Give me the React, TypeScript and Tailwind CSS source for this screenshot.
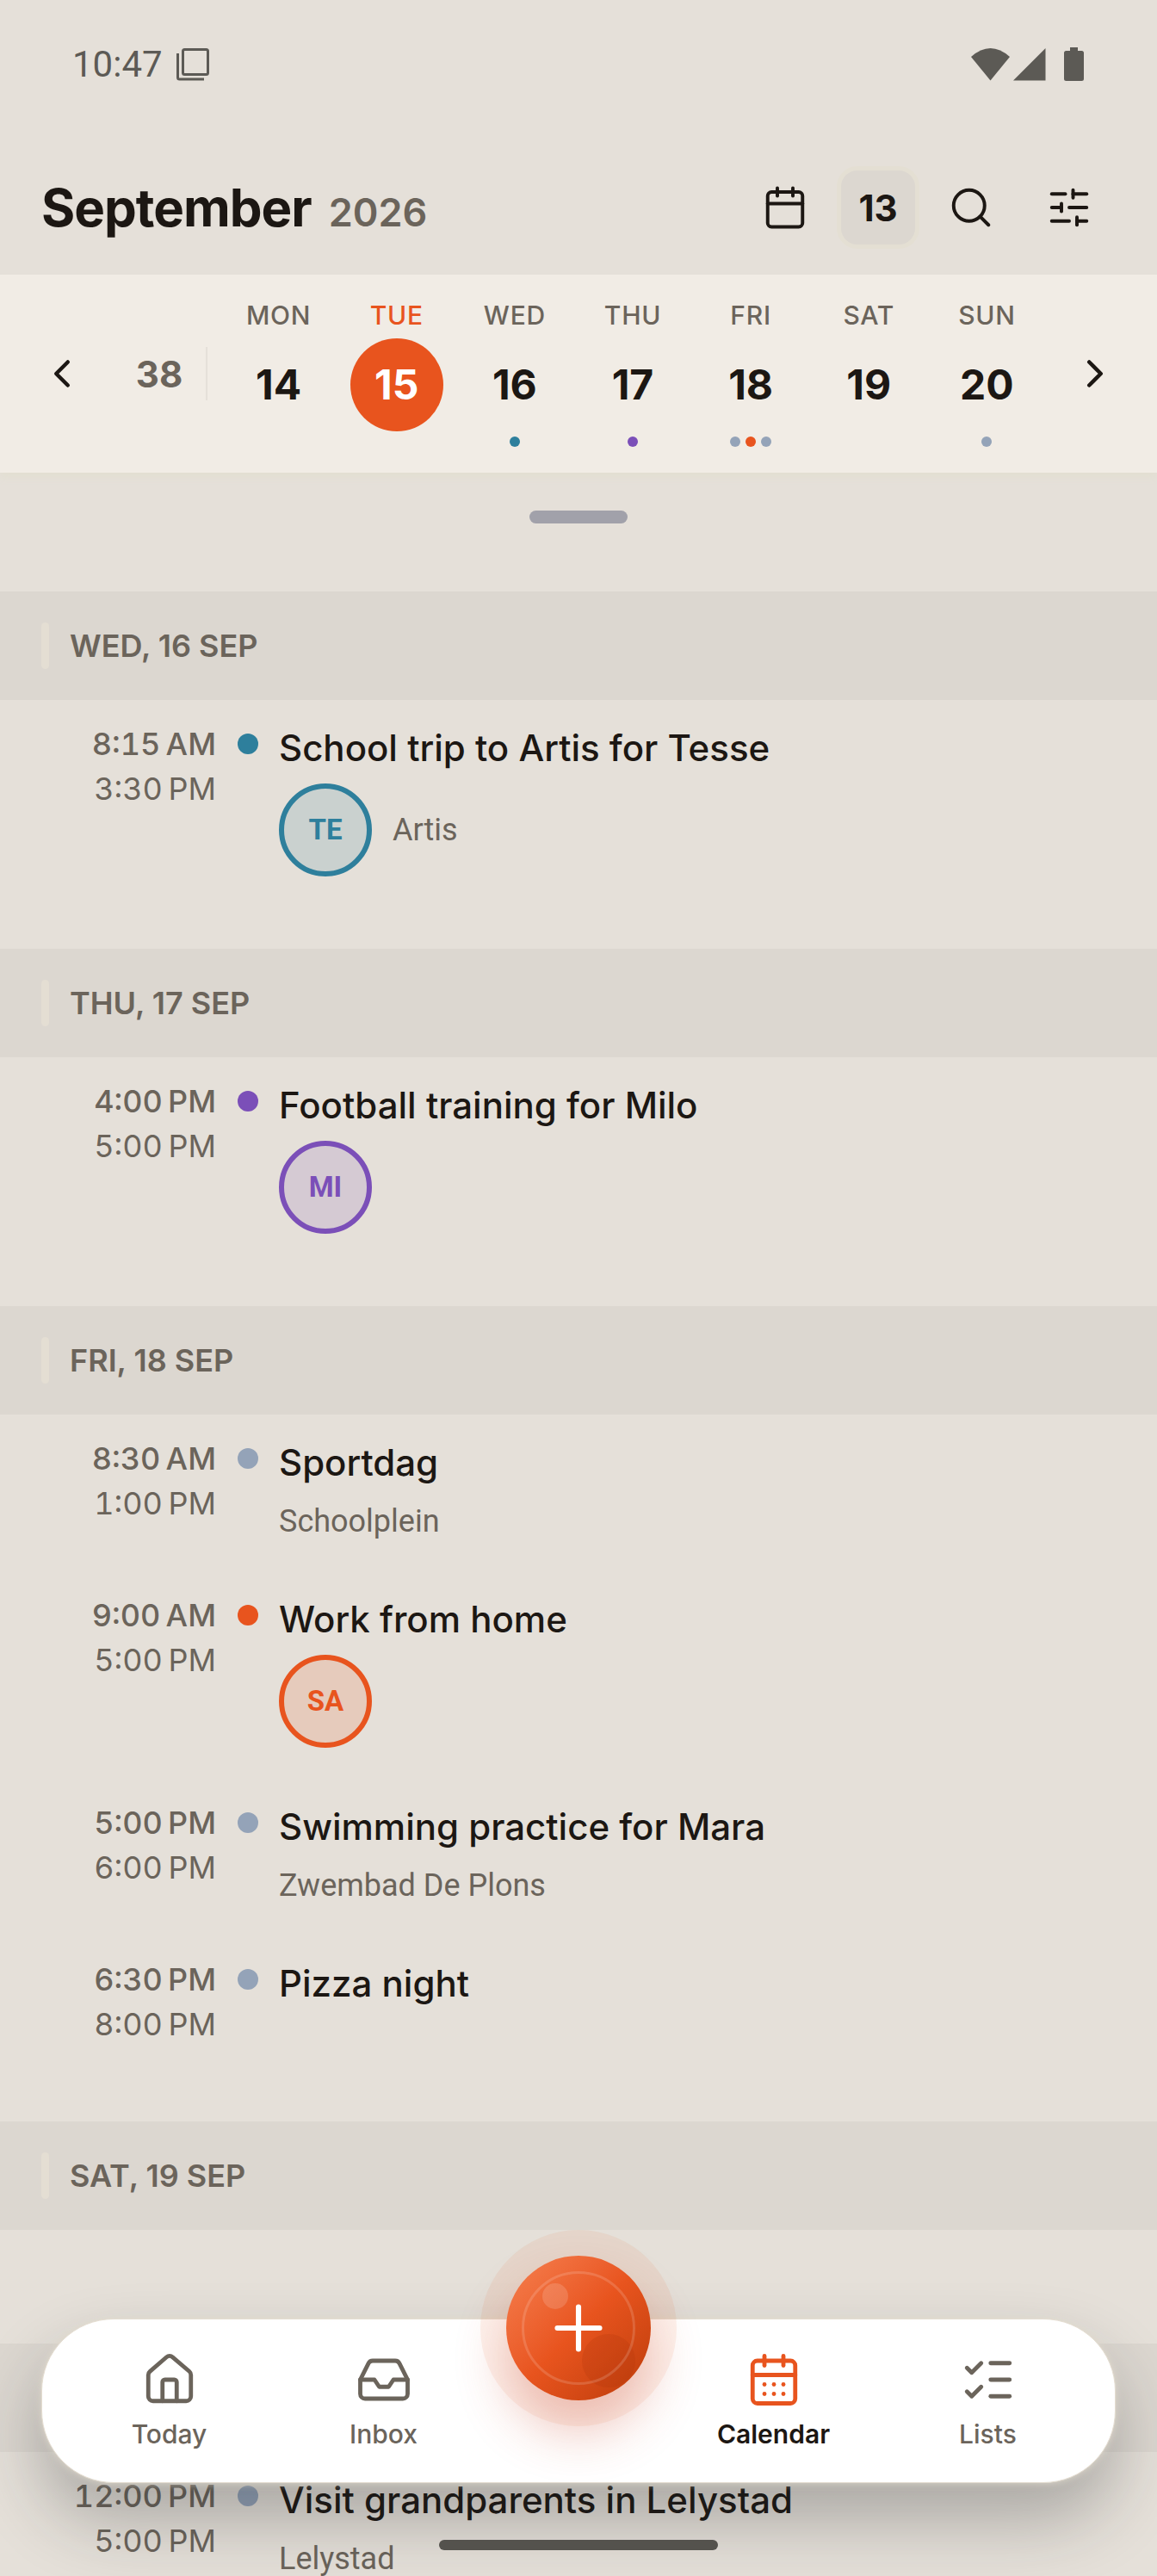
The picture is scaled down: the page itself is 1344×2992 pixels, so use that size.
import {
  Calendar,
  CalendarDays,
  ChevronLeft,
  ChevronRight,
  House,
  Inbox,
  ListChecks,
  Plus,
  Search,
  SlidersHorizontal,
} from "lucide-react";
import clsx from "clsx";

type Tone = "teal" | "purple" | "orange" | "slate";

type CalendarEvent = {
  start: string;
  end: string;
  title: string;
  tone: Tone;
  initials?: string;
  location?: string;
};

const dotColor: Record<Tone, string> = {
  teal: "bg-[#2e7f9c]",
  purple: "bg-[#7b4fb8]",
  orange: "bg-[#e8541e]",
  slate: "bg-[#94a3b8]",
};

const avatarColor: Record<Tone, string> = {
  teal: "border-[#2e7f9c] bg-[#2e7f9c]/15 text-[#2e7f9c]",
  purple: "border-[#7b4fb8] bg-[#7b4fb8]/15 text-[#7b4fb8]",
  orange: "border-[#e8541e] bg-[#e8541e]/15 text-[#e8541e]",
  slate: "border-[#94a3b8] bg-[#94a3b8]/15 text-[#94a3b8]",
};

const week: { label: string; day: number; dots: Tone[]; selected?: boolean }[] = [
  { label: "MON", day: 14, dots: [] },
  { label: "TUE", day: 15, dots: [], selected: true },
  { label: "WED", day: 16, dots: ["teal"] },
  { label: "THU", day: 17, dots: ["purple"] },
  { label: "FRI", day: 18, dots: ["slate", "orange", "slate"] },
  { label: "SAT", day: 19, dots: [] },
  { label: "SUN", day: 20, dots: ["slate"] },
];

// Times use a narrow no-break space before AM/PM
const agenda: { date: string; events: CalendarEvent[] }[] = [
  {
    date: "WED, 16 SEP",
    events: [
      {
        start: "8:15\u202fAM",
        end: "3:30\u202fPM",
        title: "School trip to Artis for Tesse",
        tone: "teal",
        initials: "TE",
        location: "Artis",
      },
    ],
  },
  {
    date: "THU, 17 SEP",
    events: [
      {
        start: "4:00\u202fPM",
        end: "5:00\u202fPM",
        title: "Football training for Milo",
        tone: "purple",
        initials: "MI",
      },
    ],
  },
  {
    date: "FRI, 18 SEP",
    events: [
      { start: "8:30\u202fAM", end: "1:00\u202fPM", title: "Sportdag", tone: "slate", location: "Schoolplein" },
      { start: "9:00\u202fAM", end: "5:00\u202fPM", title: "Work from home", tone: "orange", initials: "SA" },
      {
        start: "5:00\u202fPM",
        end: "6:00\u202fPM",
        title: "Swimming practice for Mara",
        tone: "slate",
        location: "Zwembad De Plons",
      },
      { start: "6:30\u202fPM", end: "8:00\u202fPM", title: "Pizza night", tone: "slate" },
    ],
  },
  { date: "SAT, 19 SEP", events: [] },
  {
    date: "SUN, 20 SEP",
    events: [
      {
        start: "12:00\u202fPM",
        end: "5:00\u202fPM",
        title: "Visit grandparents in Lelystad",
        tone: "slate",
        location: "Lelystad",
      },
    ],
  },
];

function StatusBar() {
  return (
    <div className="flex h-[150px] shrink-0 items-center justify-between px-[84px] text-[#5c5a55]">
      <div className="flex items-center gap-4">
        <span className="font-['Roboto',sans-serif] text-[42px] leading-[48px]">10:47</span>
        <svg className="h-[38px] w-[38px]" viewBox="0 0 38 38" fill="none" stroke="currentColor" strokeWidth="3">
          <rect x="7.5" y="1.5" width="29" height="29" rx="2" />
          <path d="M1.5 6v28a2 2 0 0 0 2 2H32" />
        </svg>
      </div>
      <svg className="h-[40px] w-[132px]" viewBox="0 0 132 40" fill="currentColor">
        <path d="M0 11Q22.500-9 45 11L22.500 38.500Z" />
        <path d="M49 38.500 86.500 1v37.500Z" />
        <path d="M115 0h9v4h4.500q2.500 0 2.500 2.500v30q0 2.500-2.500 2.500h-18q-2.500 0-2.500-2.500v-30q0-2.500 2.500-2.500H115Z" />
      </svg>
    </div>
  );
}

function Header() {
  const iconButton = "flex h-[108px] w-[108px] items-center justify-center";
  return (
    <header className="flex shrink-0 items-center justify-between px-12 pt-[37px] pb-6">
      <h1 className="flex items-baseline gap-5 pt-[6px] text-[60px] font-bold leading-[72px] tracking-[-1px]">
        September
        <span className="text-[45px] font-semibold tracking-normal text-[#6b645b]">2026</span>
      </h1>
      <div className="flex items-center gap-[6px]">
        <button type="button" aria-label="Month view" className={iconButton}>
          <Calendar className="h-[54px] w-[54px]" strokeWidth={1.75} />
        </button>
        <button
          type="button"
          aria-label="Go to today"
          className="flex h-24 w-24 items-center justify-center rounded-[24px] border-[5px] border-[#e4dfd3] bg-[#dcd7d0] text-[42px] font-bold"
        >
          13
        </button>
        <button type="button" aria-label="Search" className={iconButton}>
          <Search className="h-[54px] w-[54px]" strokeWidth={1.75} />
        </button>
        <button type="button" aria-label="Filters" className={iconButton}>
          <SlidersHorizontal className="h-[54px] w-[54px]" strokeWidth={1.75} />
        </button>
      </div>
    </header>
  );
}

function WeekStrip() {
  return (
    <section className="flex shrink-0 items-center gap-[3px] bg-[#f1ece5] px-[18px] shadow-[0_6px_8px_#e3dfd2]">
      <button type="button" aria-label="Previous week" className="flex h-[108px] w-[108px] items-center justify-center">
        <ChevronLeft className="h-[54px] w-[54px]" strokeWidth={2} />
      </button>
      <div className="flex h-[62px] w-28 items-center justify-center border-r-2 border-[#e5e0d9] pl-0.5 text-[42px] font-bold text-[#6b645b]">
        38
      </div>
      <div className="ml-[11px] grid flex-1 grid-cols-7 pt-[29px] pb-[30px]">
        {week.map((d) => (
          <button type="button" key={d.label} className="flex flex-col items-center">
            <span
              className={clsx(
                "text-[30px] font-medium leading-9 tracking-wide",
                d.selected ? "text-[#e8541e]" : "text-[#6b645b]"
              )}
            >
              {d.label}
            </span>
            <span
              className={clsx(
                "mt-[9px] flex h-[108px] w-[108px] items-center justify-center rounded-full text-[48px] font-bold",
                d.selected && "bg-[#e8541e] text-white"
              )}
            >
              {d.day}
            </span>
            <span className="mt-[6px] flex h-3 gap-[6px]">
              {d.dots.map((tone, i) => (
                <span key={i} className={clsx("h-3 w-3 rounded-full", dotColor[tone])} />
              ))}
            </span>
          </button>
        ))}
      </div>
      <button type="button" aria-label="Next week" className="flex h-[108px] w-[108px] items-center justify-center">
        <ChevronRight className="h-[54px] w-[54px]" strokeWidth={2} />
      </button>
    </section>
  );
}

function EventRow({ event }: { event: CalendarEvent }) {
  return (
    <li className="flex px-12 pt-[25px] pb-9">
      <div className="w-[203px] shrink-0 pb-[3px] text-right text-[36px] leading-[52px] tabular-nums text-[#6b645b]">
        <p className="font-medium">{event.start}</p>
        <p>{event.end}</p>
      </div>
      <span className={clsx("mt-[14px] mr-6 ml-[25px] h-6 w-6 shrink-0 rounded-full", dotColor[event.tone])} />
      <div className="min-w-0 flex-1">
        <h3 className="text-[42px] font-medium leading-[62px]">{event.title}</h3>
        {event.initials && (
          <div className="mt-[10px] flex items-center gap-6">
            <span
              className={clsx(
                "flex h-[108px] w-[108px] items-center justify-center rounded-full border-[6px] font-['Roboto',sans-serif] text-[33px] font-bold",
                avatarColor[event.tone]
              )}
            >
              {event.initials}
            </span>
            {event.location && (
              <span className="font-['Roboto',sans-serif] text-[36px] text-[#6b645b]">{event.location}</span>
            )}
          </div>
        )}
        {!event.initials && event.location && (
          <p className="mt-[15px] font-['Roboto',sans-serif] text-[36px] leading-[44px] text-[#6b645b]">
            {event.location}
          </p>
        )}
      </div>
    </li>
  );
}

function Agenda() {
  return (
    <main className="min-h-0 flex-1 overflow-hidden">
      <div className="flex justify-center pt-11 pb-[79px]">
        <div className="h-[15px] w-[114px] rounded-full bg-[#a1a1aa]" />
      </div>
      {agenda.map((day) => (
        <section key={day.date}>
          <h2 className="flex h-[126px] items-center gap-6 bg-[#dcd7d0] px-12 text-[36px] font-semibold text-[#6b645b]">
            <span className="h-[54px] w-[9px] rounded-full bg-[#e4ded3]" />
            {day.date}
          </h2>
          {day.events.length > 0 ? (
            <ul className="pb-12">
              {day.events.map((event) => (
                <EventRow key={event.title} event={event} />
              ))}
            </ul>
          ) : (
            <div className="h-[132px]" />
          )}
        </section>
      ))}
    </main>
  );
}

function NavItem({ icon: Icon, label, active }: { icon: typeof House; label: string; active?: boolean }) {
  return (
    <a
      href="#"
      aria-current={active ? "page" : undefined}
      className={clsx(
        "flex flex-1 flex-col items-center gap-3 text-[30px] leading-9",
        active ? "font-semibold text-[#1c1713]" : "font-medium text-[#6b645b]"
      )}
    >
      <Icon className={clsx("h-[66px] w-[66px]", active && "text-[#e8541e]")} strokeWidth={1.75} />
      {label}
    </a>
  );
}

function BottomNav() {
  return (
    <nav className="absolute inset-x-12 bottom-[108px] flex rounded-[84px] border border-[#e4ddd1] bg-white px-[23px] pt-[37px] pb-[38px] shadow-[0_0_10px_#e0dacd,0_42px_80px_rgba(30,34,36,0.3)]">
      <NavItem icon={House} label="Today" />
      <NavItem icon={Inbox} label="Inbox" />
      <div className="w-[204px] shrink-0" />
      <NavItem icon={CalendarDays} label="Calendar" active />
      <NavItem icon={ListChecks} label="Lists" />

      <div className="absolute -top-[104px] left-1/2 flex h-[228px] w-[228px] -translate-x-1/2 items-center justify-center rounded-full bg-[#e8541e]/8">
        <button
          type="button"
          aria-label="Add event"
          className="relative flex h-[168px] w-[168px] items-center justify-center overflow-hidden rounded-full bg-linear-135 from-[#f6804f] via-[#e8541e] to-[#bc3c09]"
        >
          <span className="absolute top-8 left-[42px] h-[30px] w-[30px] rounded-full bg-white/15" />
          <span className="absolute right-[18px] bottom-[15px] h-[62px] w-[62px] rounded-full bg-[#a83408]/20" />
          <span className="absolute inset-[18px] rounded-full border-[3px] border-white/15" />
          <Plus className="relative h-[84px] w-[84px] text-white" strokeWidth={1.75} />
        </button>
        <span className="absolute inset-[30px] -z-10 rounded-full shadow-[0_36px_60px_rgba(200,60,30,0.3)]" />
      </div>
    </nav>
  );
}

export default function App() {
  return (
    <div className="relative flex h-screen flex-col overflow-hidden bg-[#e5e0d9] font-['Inter',sans-serif] text-[#1c1713]">
      <StatusBar />
      <Header />
      <WeekStrip />
      <Agenda />
      <BottomNav />
      <div className="absolute bottom-[30px] left-1/2 h-3 w-[324px] -translate-x-1/2 rounded-full bg-[#54524d]" />
    </div>
  );
}
